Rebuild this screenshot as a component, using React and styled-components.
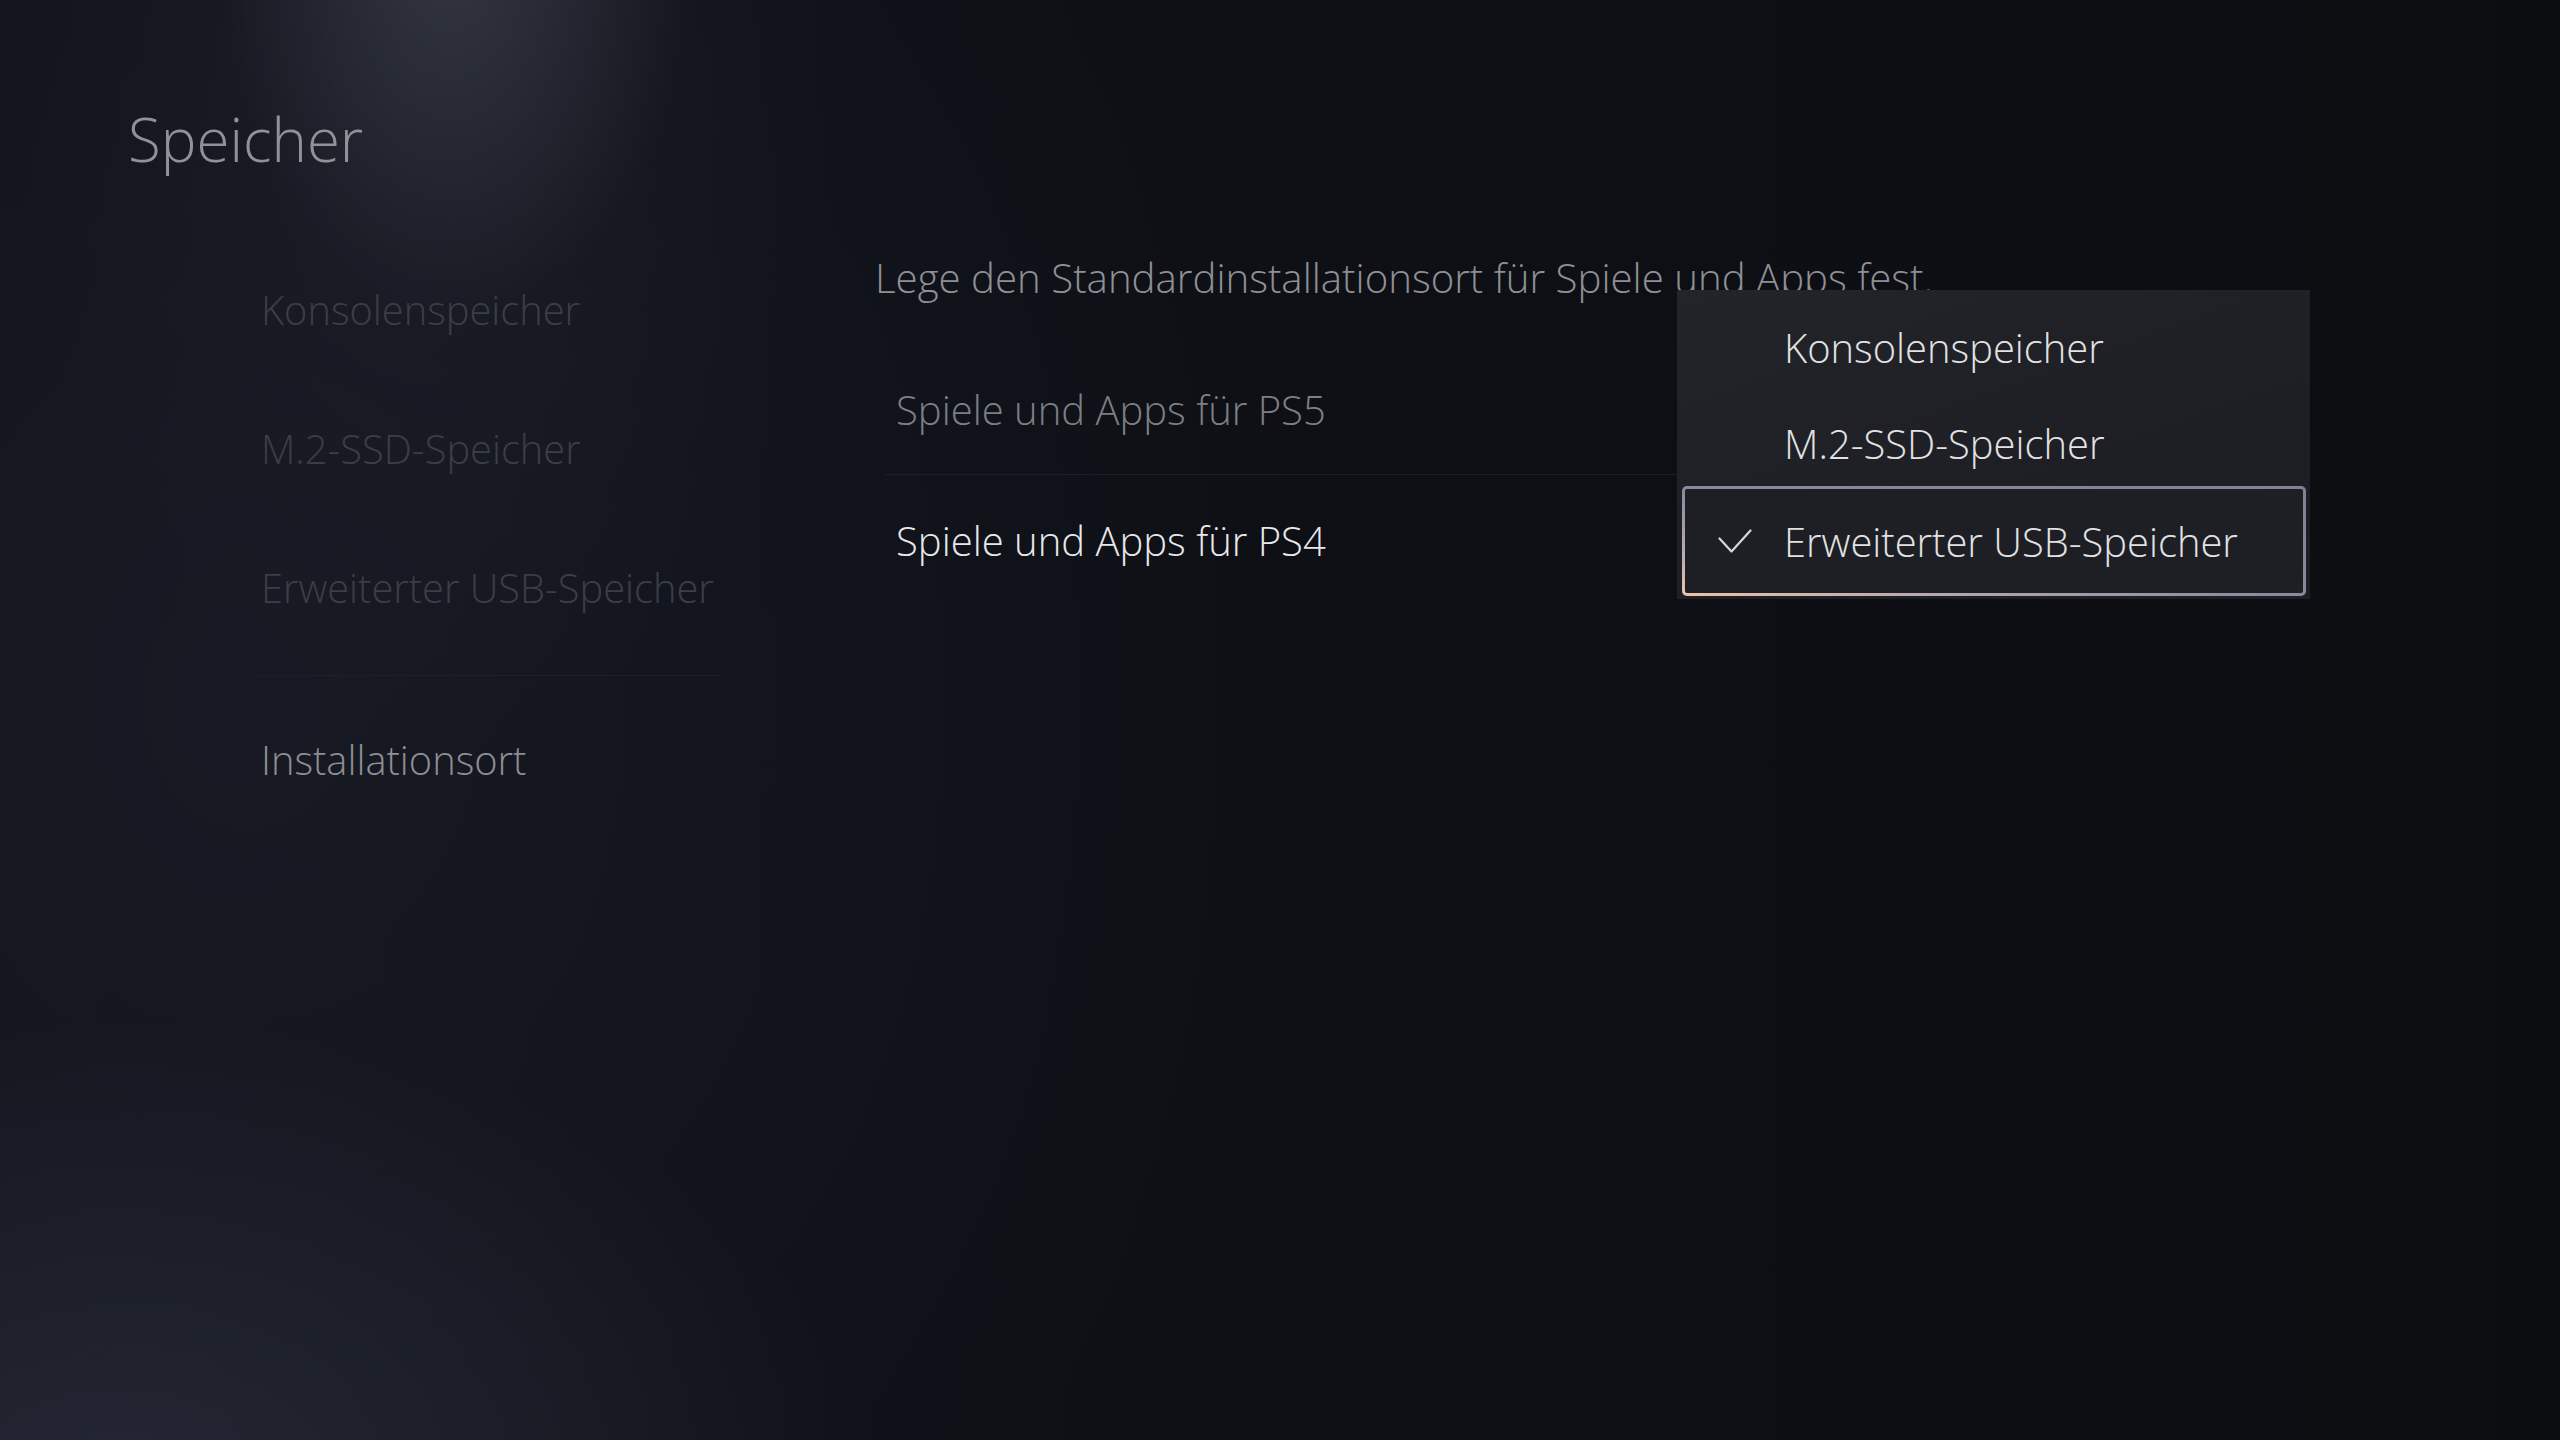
import React from "react";
import styled, { createGlobalStyle } from "styled-components";

const GlobalStyle = createGlobalStyle`
  html, body {
    margin: 0;
    padding: 0;
    background: #0c0e13;
  }
  body {
    font-family: "Open Sans", "Noto Sans", sans-serif;
    font-weight: 300;
    -webkit-font-smoothing: antialiased;
  }
`;

const navItems = [
  { label: "Konsolenspeicher", dim: true },
  { label: "M.2-SSD-Speicher", dim: true },
  { label: "Erweiterter USB-Speicher", dim: true },
];

const storageOptions = [
  "Konsolenspeicher",
  "M.2-SSD-Speicher",
  "Erweiterter USB-Speicher",
];

export default function App() {
  const selected = 2;

  return (
    <>
      <GlobalStyle />
      <Screen>
        <Title>Speicher</Title>
        <Body>
          <Nav>
            {navItems.map((item) => (
              <NavItem key={item.label} $dim={item.dim}>
                {item.label}
              </NavItem>
            ))}
            <NavDivider />
            <NavItem>Installationsort</NavItem>
          </Nav>

          <Content>
            <Description>
              Lege den Standardinstallationsort für Spiele und Apps fest.
            </Description>
            <OptionList>
              <OptionRow $muted>Spiele und Apps für PS5</OptionRow>
              <OptionRow>Spiele und Apps für PS4</OptionRow>

              <Dropdown>
                {storageOptions.map((opt, i) => (
                  <DropItem key={opt} $selected={i === selected}>
                    <CheckSlot>
                      {i === selected && (
                        <svg width="34" height="25" viewBox="0 0 34 25">
                          <path
                            d="M1.5 9.5 L13.5 22.5 L32.5 1.5"
                            fill="none"
                            stroke="#d6d7da"
                            strokeWidth="2.2"
                            strokeLinecap="round"
                            strokeLinejoin="round"
                          />
                        </svg>
                      )}
                    </CheckSlot>
                    {opt}
                  </DropItem>
                ))}
              </Dropdown>
            </OptionList>
          </Content>
        </Body>
      </Screen>
    </>
  );
}

const Screen = styled.div`
  width: 2560px;
  height: 1440px;
  overflow: hidden;
  background:
    radial-gradient(ellipse 240px 380px at 455px -60px, rgba(76, 80, 94, 0.5), rgba(76, 80, 94, 0) 100%),
    radial-gradient(ellipse 420px 760px at 430px 0px, rgba(40, 43, 54, 0.35), rgba(40, 43, 54, 0) 100%),
    radial-gradient(ellipse 760px 480px at 120px 1500px, rgba(44, 48, 62, 0.7), rgba(44, 48, 62, 0) 100%),
    radial-gradient(ellipse 1000px 1200px at 250px 700px, rgba(26, 29, 40, 0.7), rgba(26, 29, 40, 0) 100%),
    linear-gradient(90deg, #10121a 0%, #0e1016 45%, #0b0d11 100%);
`;

const Title = styled.h1`
  margin: 0;
  padding: 99px 0 0 128px;
  font-size: 60px;
  line-height: 80px;
  font-weight: 300;
  color: #909298;
`;

const Body = styled.div`
  display: grid;
  grid-template-columns: 614px 1fr;
  padding-left: 261px;
`;

const Nav = styled.nav`
  display: flex;
  flex-direction: column;
  padding-top: 61px;
`;

const NavItem = styled.div`
  height: 139px;
  display: flex;
  align-items: center;
  font-size: 39.8px;
  color: ${(p) => (p.$dim ? "#3b3e45" : "#8d8f94")};
  white-space: nowrap;
`;

const NavDivider = styled.div`
  width: 462px;
  height: 1px;
  margin: 18px 0 14px -3px;
  background: #1d2027;
`;

const Content = styled.div`
  display: flex;
  flex-direction: column;
  padding-top: 68px;
`;

const Description = styled.p`
  margin: 0 0 37px;
  height: 60px;
  display: flex;
  align-items: center;
  font-size: 40.2px;
  color: #8e9095;
  white-space: nowrap;
`;

const OptionList = styled.div`
  position: relative;
  width: 1425px;
  margin-left: 10px;
`;

const OptionRow = styled.div`
  height: 130px;
  display: flex;
  align-items: center;
  padding-left: 11px;
  font-size: 40px;
  color: ${(p) => (p.$muted ? "#7c7f85" : "#e8e8ea")};
  border-bottom: 1px solid ${(p) => (p.$muted ? "#1c1f26" : "transparent")};
`;

const Dropdown = styled.div`
  position: absolute;
  top: -54px;
  left: 792px;
  width: 633px;
  box-sizing: border-box;
  padding: 9px 4px 3px 5px;
  display: flex;
  flex-direction: column;
  background: linear-gradient(160deg, #222429 0%, #1d1f24 60%, #1c1e23 100%);
  z-index: 2;
`;

const DropItem = styled.div`
  box-sizing: border-box;
  height: ${(p) => (p.$selected ? "110px" : "96px")};
  margin-top: ${(p) => (p.$selected ? "-5px" : "0")};
  display: flex;
  align-items: center;
  gap: 32px;
  padding-left: 33px;
  border: 3px solid transparent;
  border-radius: 5px;
  font-size: 39.9px;
  color: #e2e2e4;
  white-space: nowrap;
  background: ${(p) =>
    p.$selected
      ? "linear-gradient(#1d1f24, #1d1f24) padding-box, linear-gradient(to top right, #ebc4a7 0%, #b3a6b3 22%, #878c9d 48%, #7d8394 100%) border-box"
      : "transparent"};
`;

const CheckSlot = styled.span`
  width: 34px;
  height: 25px;
  display: flex;
  flex-shrink: 0;
`;
